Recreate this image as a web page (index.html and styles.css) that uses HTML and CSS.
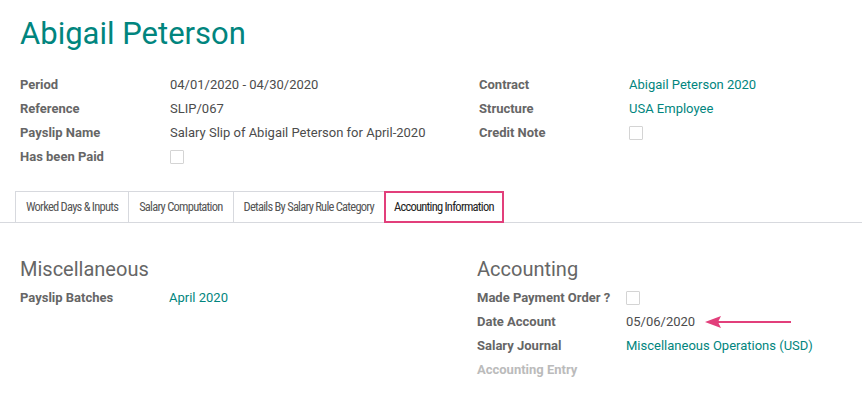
FILE: index.html
```html
<!DOCTYPE html>
<html lang="en">
<head>
    <meta charset="UTF-8">
    <meta name="viewport" content="width=device-width, initial-scale=1.0">
    <title>Abigail Peterson - Payslip</title>
    <link rel="stylesheet" href="styles.css">
</head>
<body>
    <div class="sheet">
        <h1 class="title">Abigail Peterson</h1>
        <div class="groups top-groups">
            <div class="fields">
                <div class="label">Period</div><div class="value">04/01/2020 - 04/30/2020</div>
                <div class="label">Reference</div><div class="value">SLIP/067</div>
                <div class="label">Payslip Name</div><div class="value">Salary Slip of Abigail Peterson for April-2020</div>
                <div class="label">Has been Paid</div><div class="value"><span class="checkbox"></span></div>
            </div>
            <div class="fields">
                <div class="label">Contract</div><div class="value link">Abigail Peterson 2020</div>
                <div class="label">Structure</div><div class="value link">USA Employee</div>
                <div class="label">Credit Note</div><div class="value"><span class="checkbox"></span></div>
            </div>
        </div>
    </div>

    <ul class="tabs">
        <li class="tab">Worked Days &amp; Inputs</li>
        <li class="tab">Salary Computation</li>
        <li class="tab">Details By Salary Rule Category</li>
        <li class="tab active">Accounting Information</li>
    </ul>

    <div class="sheet">
        <div class="groups bottom-groups">
            <div>
                <h2 class="group-title">Miscellaneous</h2>
                <div class="fields">
                    <div class="label">Payslip Batches</div><div class="value link">April 2020</div>
                </div>
            </div>
            <div>
                <h2 class="group-title">Accounting</h2>
                <div class="fields">
                    <div class="label">Made Payment Order ?</div><div class="value"><span class="checkbox"></span></div>
                    <div class="label">Date Account</div>
                    <div class="value">05/06/2020
                        <svg class="arrow" width="92" height="14" viewBox="0 0 92 14">
                            <line x1="10" y1="7" x2="86" y2="7" stroke="#e23f7b" stroke-width="2"/>
                            <polygon points="0,7 16,1 13,7 16,13" fill="#e23f7b"/>
                        </svg>
                    </div>
                    <div class="label">Salary Journal</div><div class="value link">Miscellaneous Operations (USD)</div>
                    <div class="label muted">Accounting Entry</div><div class="value"></div>
                </div>
            </div>
        </div>
    </div>
</body>
</html>
```

FILE: styles.css
```css
body {
    margin: 0;
    padding: 0;
    font-family: Roboto, "Liberation Sans", sans-serif;
    font-size: 13px;
    color: #4c4c4c;
    background-color: #fff;
}
.sheet {
    padding: 0 20px;
}
.title {
    margin: 14px 0 19px;
    font-size: 31px;
    font-weight: 400;
    line-height: 40px;
    color: #01857e;
}
.groups {
    display: grid;
    column-gap: 20px;
    align-items: start;
}
.top-groups {
    grid-template-columns: 439px 1fr;
}
.bottom-groups {
    grid-template-columns: 437px 1fr;
    margin-top: 32px;
}
.fields {
    display: grid;
    grid-template-columns: 150px 1fr;
    line-height: 24px;
}
.bottom-groups .fields {
    grid-template-columns: 149px 1fr;
}
.label {
    font-weight: 700;
    color: #666;
}
.label.muted {
    color: #bbb;
}
.value {
    color: #4c4c4c;
    display: flex;
    align-items: center;
}
.link {
    color: #01857e;
}
.checkbox {
    display: inline-block;
    width: 12px;
    height: 12px;
    border: 1px solid #d4d4d4;
    border-radius: 1px;
    background: #fff;
}
.arrow {
    margin-left: 10px;
}
.tabs {
    display: flex;
    list-style: none;
    margin: 22px 0 0;
    padding: 0 0 0 15px;
    border-bottom: 1px solid #d7d9de;
    font-family: "Roboto Condensed", "Liberation Sans Narrow", "DejaVu Sans Condensed", Roboto, sans-serif;
    font-stretch: condensed;
    font-size: 12.5px;
    letter-spacing: -0.75px;
}
.tab {
    padding: 0 10px;
    line-height: 30px;
    color: #555;
    border: 1px solid #d7d9de;
    border-bottom: none;
    margin-right: -1px;
}
.tab.active {
    color: #222;
    border: 2px solid #e23f7b;
    margin-bottom: -1px;
    line-height: 28px;
    background: #fff;
    padding: 0 8px;
}
.group-title {
    margin: 0 0 3px;
    font-size: 20px;
    font-weight: 400;
    line-height: 28px;
    color: #666;
}
```
